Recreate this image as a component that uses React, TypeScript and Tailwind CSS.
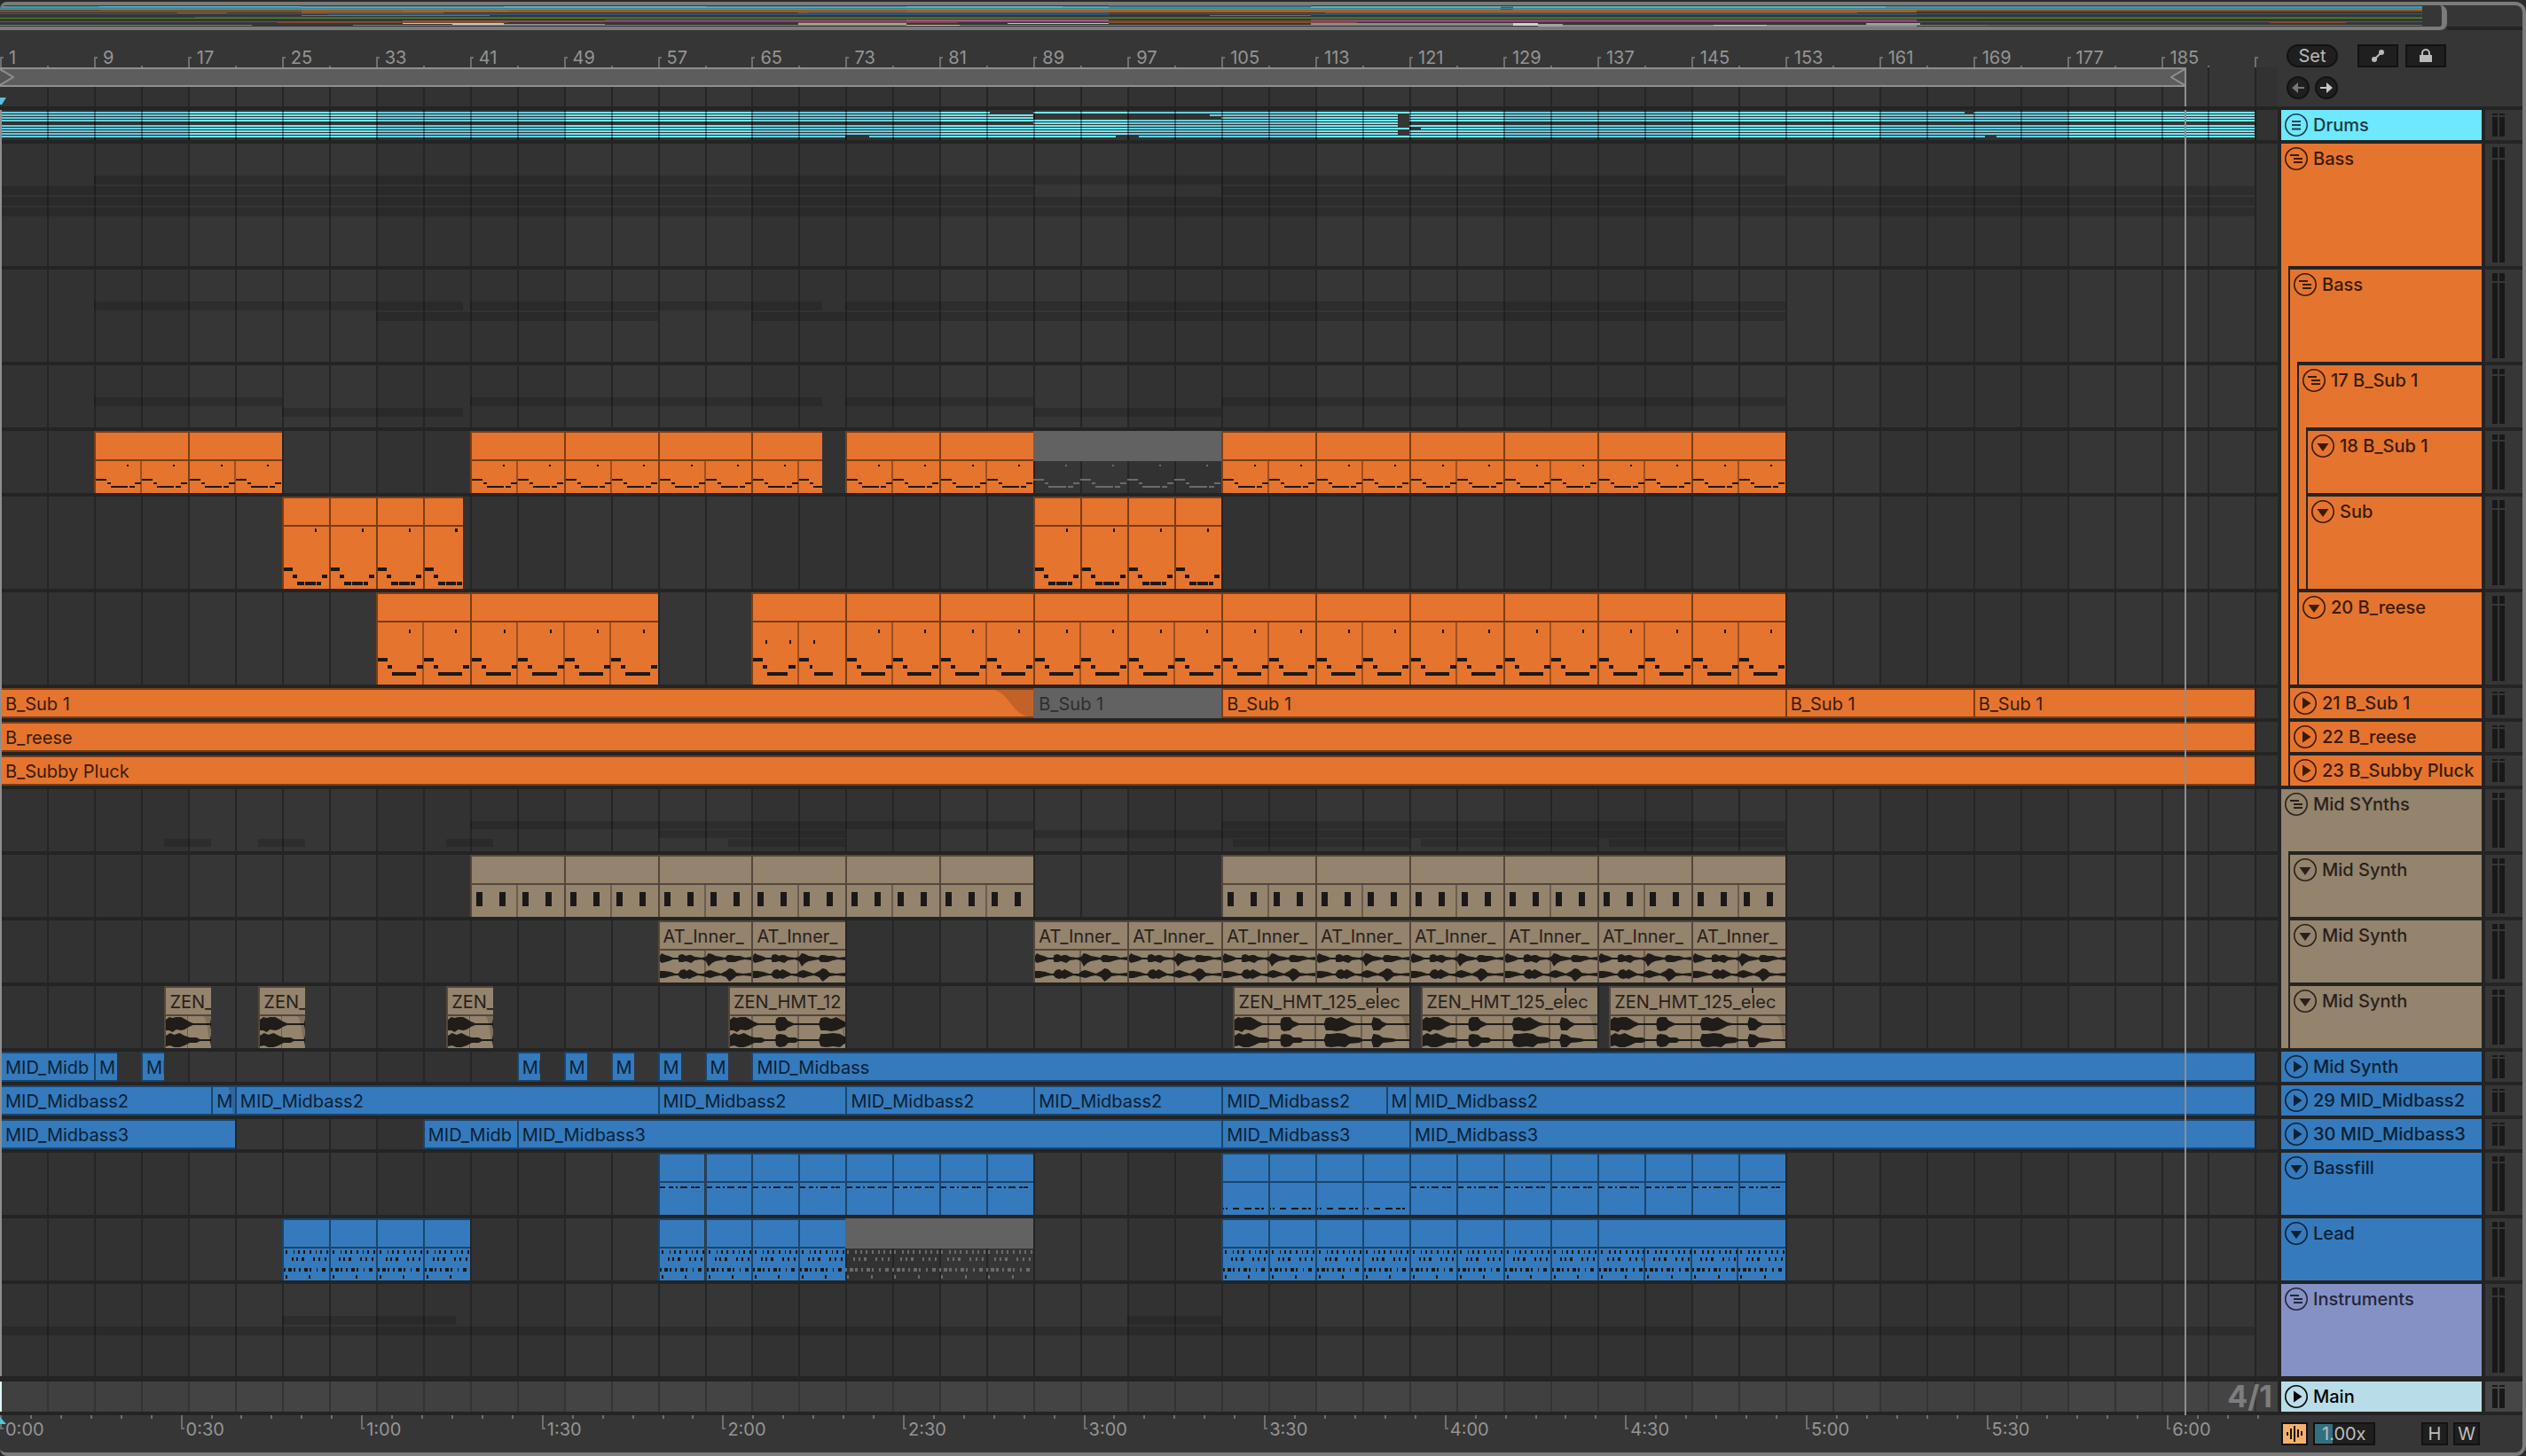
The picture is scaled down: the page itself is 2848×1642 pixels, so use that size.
import { useState } from 'react'
import clsx from 'clsx'

const VISIBLE_BARS = 193.93
const END_BAR = 193
const LOCATOR_BAR = 187
const BARS_PER_SECOND = 0.5125
// drawing units per bar inside the clip previews
const UNIT = 13.25

const barPos = (bar: number) => `${((bar - 1) / VISIBLE_BARS) * 100}%`
const barLen = (bars: number) => `${(bars / VISIBLE_BARS) * 100}%`
const range = (from: number, to: number, step: number) =>
  Array.from({ length: Math.ceil((to - from) / step) }, (_, i) => from + i * step)

type Tone = 'cyan' | 'orange' | 'tan' | 'blue' | 'violet' | 'main'
type Note = [x: number, y: number, w: number, h: number]
type Preview = 'sub' | 'subTall' | 'reese' | 'reeseIntro' | 'chords' | 'fill' | 'fillLow' | 'lead' | 'inner' | 'zen'

interface Clip {
  start: number
  end: number
  name?: string
  preview?: Preview
  off?: boolean
  fade?: number
}

interface Track {
  name: string
  tone: Tone
  kind: 'drums' | 'group' | 'open' | 'folded'
  size: 'xs' | 'sm' | 'md' | 'lg'
  clips?: Clip[]
  summary?: [number, number][][]
  tight?: boolean
  children?: Track[]
}

const TONES: Record<Tone, { fill: string; edge: string; text: string; line: string }> = {
  cyan: { fill: 'bg-[#6ee8ff]', edge: 'border-[#2f6f7c]', text: 'text-[#1c3c44]', line: '#2f6f7c' },
  orange: { fill: 'bg-[#e5742e]', edge: 'border-[#7a3d15]', text: 'text-[#3a1c06]', line: '#9c4f20' },
  tan: { fill: 'bg-[#94836d]', edge: 'border-[#54473b]', text: 'text-[#28211b]', line: '#6b5d4d' },
  blue: { fill: 'bg-[#357abc]', edge: 'border-[#1a456d]', text: 'text-[#0a2236]', line: '#1a456d' },
  violet: { fill: 'bg-[#8591c5]', edge: 'border-[#454b69]', text: 'text-[#23263a]', line: '#454b69' },
  main: { fill: 'bg-[#b8dde8]', edge: 'border-[#5d6f74]', text: 'text-[#050505]', line: '#5d6f74' },
}

const SIZES = { xs: 'h-[34px]', sm: 'h-[70px]', md: 'h-[104px]', lg: 'h-[138px]' }

const split = (start: number, end: number, step: number, preview: Preview, name?: string): Clip[] =>
  range(start, end, step).map((s) => ({ start: s, end: Math.min(s + step, end), preview, name }))

const PATTERNS: Record<Exclude<Preview, 'inner' | 'zen'>, { bars: number; notes: Note[] }> = {
  sub: {
    bars: 4,
    notes: [[37, 4, 2, 2], [1, 20, 12, 2], [14, 24, 4, 2], [18, 28, 20, 2], [40, 28, 6, 2], [46, 24, 7, 2]],
  },
  subTall: {
    bars: 4,
    notes: [
      [37, 2, 3, 4], [1, 46, 10, 4], [11, 54, 6, 4], [17, 62, 8, 4], [26, 62, 12, 4], [39, 62, 6, 4], [46, 54, 6, 4],
    ],
  },
  reese: {
    bars: 4,
    notes: [[37, 8, 2, 4], [1, 40, 11, 4], [12, 48, 5, 4], [17, 56, 28, 4], [46, 48, 7, 4]],
  },
  reeseIntro: {
    bars: 8,
    notes: [
      [15, 20, 2, 4], [43, 20, 2, 4], [70, 20, 2, 4], [1, 40, 11, 4], [12, 48, 5, 4], [17, 56, 24, 4],
      [42, 48, 8, 4], [54, 40, 11, 4], [66, 48, 3, 4], [71, 56, 22, 4],
    ],
  },
  chords: { bars: 2, notes: [[6, 8, 7, 16]] },
  fill: {
    bars: 4,
    notes: [[1, 4, 6, 2], [11, 4, 6, 2], [20, 4, 2, 2], [25, 4, 8, 2], [37, 4, 5, 2], [43, 4, 5, 2]],
  },
  fillLow: {
    bars: 4,
    notes: [[0, 28, 2, 2], [4, 28, 2, 2], [12, 28, 8, 2], [26, 28, 8, 2], [38, 28, 6, 2], [46, 28, 3, 2]],
  },
  lead: {
    bars: 4,
    notes: [
      [3, 2, 2, 4], [12, 2, 2, 4], [18, 2, 2, 4], [24, 2, 2, 4], [31, 2, 2, 4], [38, 2, 2, 4], [44, 2, 2, 4],
      [51, 2, 2, 4], [10, 10, 2, 4], [16, 10, 2, 4], [22, 10, 3, 4], [35, 10, 2, 4], [42, 10, 2, 4],
      [49, 10, 2, 4], [1, 22, 2, 4], [6, 22, 4, 4], [12, 22, 3, 4], [19, 22, 2, 4], [25, 22, 4, 4],
      [31, 22, 2, 4], [39, 22, 2, 4], [46, 22, 4, 4], [3, 30, 2, 4], [30, 30, 2, 4],
    ],
  },
}

// [x, height above the centre, height below it]
type Peak = [number, number, number]

const INNER_WAVE: { left: Peak[]; right: Peak[] } = {
  left: [
    [0, 3, 3], [2, 6, 5], [6, 4, 4], [10, 3, 3], [15, 1, 1], [21, 1, 1], [22, 4, 4], [26, 5, 4], [30, 3, 3],
    [33, 4, 4], [36, 4, 5], [40, 2, 2], [48, 1, 1], [53, 2, 3], [56, 6, 9], [60, 5, 5], [64, 3, 3], [70, 2, 2],
    [75, 1, 1], [78, 4, 4], [82, 4, 4], [86, 3, 4], [92, 3, 2], [98, 1, 1], [106, 2, 2],
  ],
  right: [
    [0, 4, 4], [5, 4, 4], [12, 3, 2], [18, 1, 1], [21, 1, 1], [24, 5, 4], [28, 6, 5], [31, 4, 4], [34, 6, 5],
    [38, 4, 3], [44, 1, 1], [50, 1, 2], [54, 4, 3], [58, 5, 4], [64, 3, 2], [70, 1, 1], [76, 4, 3], [80, 7, 8],
    [84, 6, 5], [88, 2, 2], [96, 1, 1], [106, 2, 2],
  ],
}

const ZEN_WAVE: { left: Peak[]; right: Peak[] } = {
  left: [
    [0, 5, 7], [4, 8, 7], [8, 7, 9], [12, 8, 6], [18, 8, 7], [22, 6, 6], [27, 3, 3], [32, 1, 1], [52, 1, 1],
    [53, 6, 6], [56, 8, 8], [63, 8, 7], [66, 4, 4], [73, 1, 1], [102, 1, 1], [104, 7, 7], [110, 8, 7],
    [116, 6, 8], [122, 8, 7], [127, 5, 5], [133, 2, 2], [138, 1, 1], [156, 1, 1], [158, 8, 7], [165, 6, 7],
    [168, 3, 4], [173, 1, 1], [200, 1, 1],
  ],
  right: [
    [0, 5, 7], [5, 8, 6], [10, 6, 8], [16, 8, 8], [22, 5, 6], [28, 3, 3], [36, 3, 3], [40, 1, 1], [52, 1, 1],
    [53, 6, 6], [57, 7, 8], [63, 6, 7], [67, 3, 3], [75, 3, 3], [78, 1, 1], [102, 1, 1], [104, 7, 7],
    [110, 7, 8], [118, 8, 7], [126, 7, 8], [131, 4, 4], [142, 3, 3], [146, 1, 1], [156, 1, 1], [158, 7, 8],
    [164, 6, 8], [169, 3, 3], [180, 2, 2], [184, 1, 1], [200, 1, 1],
  ],
}

function wavePath(peaks: Peak[], mid: number) {
  const top = peaks.map(([x, up]) => `${x} ${mid - up}`)
  const bottom = [...peaks].reverse().map(([x, , down]) => `${x} ${mid + down}`)
  return `M${[...top, ...bottom].join('L')}Z`
}

const TRACKS: Track[] = [
  { name: 'Drums', tone: 'cyan', kind: 'drums', size: 'xs' },
  {
    name: 'Bass',
    tone: 'orange',
    kind: 'group',
    size: 'lg',
    summary: [[[9, 153]], [[1, 89], [105, 193]], [[1, 193]], [[1, 193]]],
    children: [
      {
        name: 'Bass',
        tone: 'orange',
        kind: 'group',
        size: 'md',
        summary: [[[9, 40.4], [41, 71], [73, 153]], [[33, 57], [65, 153]]],
        children: [
          {
            name: '17 B_Sub 1',
            tone: 'orange',
            kind: 'group',
            size: 'sm',
            summary: [[[9, 25], [41, 71], [73, 89], [105, 153]], [[25, 40.4], [89, 105]]],
            children: [
              {
                name: '18 B_Sub 1',
                tone: 'orange',
                kind: 'open',
                size: 'sm',
                clips: [
                  ...split(9, 25, 8, 'sub'),
                  ...split(41, 71, 8, 'sub'),
                  ...split(73, 89, 8, 'sub'),
                  { start: 89, end: 105, preview: 'sub', off: true },
                  ...split(105, 153, 8, 'sub'),
                ],
              },
              {
                name: 'Sub',
                tone: 'orange',
                kind: 'open',
                size: 'md',
                clips: [...split(25, 40.4, 4, 'subTall'), ...split(89, 105, 4, 'subTall')],
              },
            ],
          },
          {
            name: '20 B_reese',
            tone: 'orange',
            kind: 'open',
            size: 'md',
            clips: [
              { start: 33, end: 41, preview: 'reese' },
              { start: 41, end: 57, preview: 'reese' },
              { start: 65, end: 73, preview: 'reeseIntro' },
              ...split(73, 153, 8, 'reese'),
            ],
          },
        ],
      },
      {
        name: '21 B_Sub 1',
        tone: 'orange',
        kind: 'folded',
        size: 'xs',
        clips: [
          { start: 1, end: 89, name: 'B_Sub 1', fade: 45 },
          { start: 89, end: 105, name: 'B_Sub 1', off: true },
          { start: 105, end: 153, name: 'B_Sub 1' },
          { start: 153, end: 169, name: 'B_Sub 1' },
          { start: 169, end: 193, name: 'B_Sub 1' },
        ],
      },
      { name: '22 B_reese', tone: 'orange', kind: 'folded', size: 'xs', clips: [{ start: 1, end: 193, name: 'B_reese' }] },
      {
        name: '23 B_Subby Pluck',
        tone: 'orange',
        kind: 'folded',
        size: 'xs',
        clips: [{ start: 1, end: 193, name: 'B_Subby Pluck' }],
      },
    ],
  },
  {
    name: 'Mid SYnths',
    tone: 'tan',
    kind: 'group',
    size: 'sm',
    tight: true,
    summary: [
      [[41, 89], [105, 153]],
      [[57, 73], [89, 153]],
      [[15, 19], [23, 27], [39, 43], [63, 73], [106, 121], [122, 137], [138, 153]],
    ],
    children: [
      {
        name: 'Mid Synth',
        tone: 'tan',
        kind: 'open',
        size: 'sm',
        clips: [...split(41, 89, 8, 'chords'), ...split(105, 153, 8, 'chords')],
      },
      {
        name: 'Mid Synth',
        tone: 'tan',
        kind: 'open',
        size: 'sm',
        clips: [...split(57, 73, 8, 'inner', 'AT_Inner_'), ...split(89, 153, 8, 'inner', 'AT_Inner_')],
      },
      {
        name: 'Mid Synth',
        tone: 'tan',
        kind: 'open',
        size: 'sm',
        clips: [
          { start: 15, end: 19, name: 'ZEN_', preview: 'zen', fade: 8 },
          { start: 23, end: 27, name: 'ZEN_', preview: 'zen', fade: 8 },
          { start: 39, end: 43, name: 'ZEN_', preview: 'zen', fade: 8 },
          { start: 63, end: 73, name: 'ZEN_HMT_12', preview: 'zen', fade: 8 },
          { start: 106, end: 121, name: 'ZEN_HMT_125_elec', preview: 'zen', fade: 8 },
          { start: 122, end: 137, name: 'ZEN_HMT_125_elec', preview: 'zen', fade: 8 },
          { start: 138, end: 153, name: 'ZEN_HMT_125_elec', preview: 'zen', fade: 8 },
        ],
      },
    ],
  },
  {
    name: 'Mid Synth',
    tone: 'blue',
    kind: 'folded',
    size: 'xs',
    clips: [
      { start: 1, end: 9, name: 'MID_Midb' },
      { start: 9, end: 11, name: 'M' },
      { start: 13, end: 15, name: 'MI' },
      { start: 45, end: 47, name: 'MI' },
      ...[49, 53, 57, 61].map((start) => ({ start, end: start + 2, name: 'M' })),
      { start: 65, end: 193, name: 'MID_Midbass' },
    ],
  },
  {
    name: '29 MID_Midbass2',
    tone: 'blue',
    kind: 'folded',
    size: 'xs',
    clips: [
      { start: 1, end: 19, name: 'MID_Midbass2' },
      { start: 19, end: 21, name: 'M', fade: 8 },
      { start: 21, end: 57, name: 'MID_Midbass2' },
      { start: 57, end: 73, name: 'MID_Midbass2' },
      { start: 73, end: 89, name: 'MID_Midbass2' },
      { start: 89, end: 105, name: 'MID_Midbass2' },
      { start: 105, end: 119, name: 'MID_Midbass2' },
      { start: 119, end: 121, name: 'M' },
      { start: 121, end: 193, name: 'MID_Midbass2' },
    ],
  },
  {
    name: '30 MID_Midbass3',
    tone: 'blue',
    kind: 'folded',
    size: 'xs',
    clips: [
      { start: 1, end: 21, name: 'MID_Midbass3' },
      { start: 37, end: 45, name: 'MID_Midb' },
      { start: 45, end: 105, name: 'MID_Midbass3' },
      { start: 105, end: 121, name: 'MID_Midbass3' },
      { start: 121, end: 193, name: 'MID_Midbass3' },
    ],
  },
  {
    name: 'Bassfill',
    tone: 'blue',
    kind: 'open',
    size: 'sm',
    clips: [...split(57, 89, 4, 'fill'), ...split(105, 121, 4, 'fillLow'), ...split(121, 153, 4, 'fill')],
  },
  {
    name: 'Lead',
    tone: 'blue',
    kind: 'open',
    size: 'sm',
    clips: [
      ...split(25, 41, 4, 'lead'),
      ...split(57, 73, 4, 'lead'),
      { start: 73, end: 89, preview: 'lead', off: true },
      ...split(105, 137, 4, 'lead'),
      { start: 137, end: 153, preview: 'lead' },
    ],
  },
  {
    name: 'Instruments',
    tone: 'violet',
    kind: 'group',
    size: 'md',
    summary: [[[25, 39.8], [97, 105]], [[1, 193]]],
  },
]

const MAIN: Track = { name: 'Main', tone: 'main', kind: 'folded', size: 'xs' }

const DRUM_ROWS: [number, number][][] = [
  [[1, 85.3], [89, 168.3], [169, 193]],
  [[1, 89], [104, 120], [121, 193]],
  [[1, 89], [105, 120], [121, 193]],
  [[1, 120], [121, 193]],
  [[89, 120]],
  [[1, 120], [121, 193]],
  [[1, 121], [122, 193]],
  [[1, 120], [121, 193]],
  [[1, 120], [121, 193]],
  [[1, 73], [75, 96], [98, 170], [171, 193]],
]

// [x, y, width, height, colour] on a 2730 x 24 strip
const OVERVIEW: [number, number, number, number, string][] = [
  [0, 1, 2730, 4, '#4796a3'], [112, 1, 228, 1, '#5cb9c8'], [340, 2, 910, 2, '#54aebc'], [568, 1, 228, 1, '#5cb9c8'],
  [1022, 1, 176, 1, '#5cb9c8'], [1250, 0, 228, 2, '#2d6c75'], [1478, 1, 214, 3, '#54b3c2'], [1706, 1, 420, 2, '#54b3c2'],
  [1692, 2, 14, 3, '#356068'], [0, 3, 2730, 1, '#3e8490'],
  [0, 5, 340, 3, '#7b4f2a'], [0, 5, 112, 1, '#5d4431'], [340, 5, 910, 3, '#9b5a26'], [454, 6, 120, 1, '#bb6526'],
  [1022, 5, 1138, 3, '#a85f25'], [2160, 5, 570, 2, '#8a5126'],
  [200, 8, 56, 1, '#655a4c'], [340, 8, 160, 1, '#655a4c'], [900, 8, 350, 1, '#655a4c'], [1494, 8, 600, 1, '#655a4c'],
  [0, 9, 2730, 1, '#2e5c84'], [370, 9, 540, 2, '#28567d'], [910, 8, 340, 3, '#28567d'], [1478, 9, 682, 2, '#28567d'],
  [340, 11, 212, 1, '#4c8f2e'], [1364, 11, 114, 1, '#4c8f2e'], [220, 13, 2510, 1, '#4b5560'],
  [0, 14, 2730, 1, '#4c8a22'], [682, 16, 568, 3, '#7f4672'], [1022, 16, 228, 2, '#a84f8a'], [1478, 16, 682, 3, '#94437c'],
  [0, 18, 2730, 1, '#694a73'], [340, 18, 114, 2, '#8e4540'], [454, 17, 228, 2, '#8e4a4a'], [1250, 17, 228, 2, '#7b463a'],
  [312, 19, 260, 1, '#7c4a2c'], [900, 19, 180, 1, '#7c4a2c'], [1250, 19, 280, 1, '#8a4f2a'], [2558, 19, 86, 1, '#8a4f2a'],
  [454, 20, 114, 1, '#c4c4c4'], [510, 21, 58, 1, '#c4c4c4'], [568, 21, 114, 2, '#8e8e8e'], [0, 22, 2730, 1, '#7d7d7d'],
  [284, 22, 114, 1, '#363636'], [900, 20, 122, 2, '#a3a3a3'], [1022, 22, 60, 1, '#c4c4c4'], [1136, 20, 114, 1, '#c4c4c4'],
  [1478, 20, 228, 2, '#8c8c8c'], [1706, 20, 28, 3, '#d2d2d2'], [1734, 21, 28, 3, '#a3a3a3'], [1762, 22, 398, 2, '#8c8c8c'],
  [1932, 22, 60, 1, '#c4c4c4'], [2104, 20, 60, 2, '#a3a3a3'], [2240, 22, 490, 1, '#6e6e6e'],
]

function Grid({ overlay = false }: { overlay?: boolean }) {
  return (
    <div className="pointer-events-none absolute inset-0 overflow-hidden">
      {range(overlay ? 1 : 17, END_BAR, 32).map((bar) => (
        <div
          key={bar}
          className={clsx('absolute inset-y-0', overlay ? 'bg-[#323232]/15' : 'bg-[#363636]')}
          style={{ left: barPos(bar), width: barLen(16) }}
        />
      ))}
      {range(5, END_BAR + 1, 4).map((bar) => (
        <div
          key={bar}
          className={clsx('absolute inset-y-0 w-0.5', overlay ? 'bg-black/35' : 'bg-[#252525]')}
          style={{ left: barPos(bar) }}
        />
      ))}
    </div>
  )
}

function Locator() {
  return <div className="absolute inset-y-0 w-0.5 bg-[#8f8f8f]" style={{ left: barPos(LOCATOR_BAR) }} />
}

function Overview() {
  return (
    <div className="flex h-7">
      <div className="w-[97%] rounded-r-lg border-r-[6px] border-b-4 border-[#7b7b7b]">
        <svg className="h-6 w-[99.2%]" viewBox="0 0 2730 24" preserveAspectRatio="none" shapeRendering="crispEdges">
          {OVERVIEW.map(([x, y, w, h, fill], i) => (
            <rect key={i} x={x} y={y} width={w} height={h} fill={fill} />
          ))}
        </svg>
      </div>
      <div className="flex-1 border-b-4 border-[#242424]" />
    </div>
  )
}

function BarRuler() {
  return (
    <div className="relative h-[42px] text-[20px] leading-[22px] text-[#949494]">
      {range(5, END_BAR, 8).map((bar) => (
        <div key={bar} className="absolute bottom-0 h-0.5 w-0.5 bg-[#6f6f6f]" style={{ left: barPos(bar) }} />
      ))}
      {range(1, END_BAR + 1, 8).map((bar) => (
        <div key={bar} className="absolute bottom-0 flex items-end gap-1.5" style={{ left: barPos(bar) }}>
          <div className="h-3 w-1 border-t-2 border-l-2 border-[#6f6f6f]" />
          {bar < END_BAR && <span>{bar}</span>}
        </div>
      ))}
    </div>
  )
}

function LoopBrace() {
  return (
    <div
      className="relative flex h-[22px] justify-between border-y-2 border-[#8f8f8f] bg-[#5d5d5d]"
      style={{ width: barLen(LOCATOR_BAR - 1) }}
    >
      <svg className="h-[18px] w-4 fill-[#555] stroke-[#8f8f8f] stroke-2" viewBox="0 0 16 18">
        <path d="M0 0 15 9 0 18" />
      </svg>
      <svg className="h-[18px] w-4 fill-[#555] stroke-[#8f8f8f] stroke-2" viewBox="0 0 16 18">
        <path d="M16 0 1 9 16 18" />
      </svg>
    </div>
  )
}

function TimeRuler() {
  return (
    <div className="relative h-full flex-1 text-[20px] leading-6 text-[#949494]">
      {range(5, 376, 5)
        .filter((s) => s % 30 !== 0)
        .map((s) => (
          <div key={s} className="absolute top-0 h-1 w-0.5 bg-[#6f6f6f]" style={{ left: barLen(s * BARS_PER_SECOND) }} />
        ))}
      {range(0, 361, 30).map((s) => (
        <div key={s} className="absolute top-0 flex gap-0.5" style={{ left: barLen(s * BARS_PER_SECOND) }}>
          <div className="h-4 w-1 border-b-2 border-l-2 border-[#6f6f6f]" />
          <span className="pt-1">{`${Math.floor(s / 60)}:${String(s % 60).padStart(2, '0')}`}</span>
        </div>
      ))}
      <svg className="absolute top-0.5 left-0 h-2 w-2 fill-[#55c3d9]" viewBox="0 0 8 8">
        <path d="M0 0 7 8H0Z" />
      </svg>
    </div>
  )
}

function ClipPreview({ clip, tone, tall }: { clip: Clip; tone: Tone; tall: boolean }) {
  const bars = clip.end - clip.start
  const height = tall ? 70 : 36
  const width = bars * UNIT
  const ink = clip.off ? '#6b6b6b' : '#1b1917'
  const preview = clip.preview!

  return (
    <svg
      className="block min-h-0 w-full flex-1"
      viewBox={`0 0 ${width} ${height}`}
      preserveAspectRatio="none"
      shapeRendering="crispEdges"
    >
      {!clip.off &&
        range(clip.start, clip.end, 1)
          .filter((bar) => (bar - 1) % 4 === 0 && bar > clip.start)
          .map((bar) => (
            <rect key={bar} x={(bar - clip.start) * UNIT - 2} width={2} height={height} fill={TONES[tone].line} />
          ))}
      {preview === 'inner' || preview === 'zen' ? (
        <g fill="#1f1c19" shapeRendering="auto">
          <path d={wavePath((preview === 'inner' ? INNER_WAVE : ZEN_WAVE).left, 9)} />
          <path d={wavePath((preview === 'inner' ? INNER_WAVE : ZEN_WAVE).right, 27)} />
        </g>
      ) : (
        range(0, bars, PATTERNS[preview].bars).map((offset) => (
          <g key={offset} transform={`translate(${offset * UNIT - 1} 0)`} fill={ink}>
            {PATTERNS[preview].notes.map(([x, y, w, h]) => (
              <rect key={`${x}-${y}`} x={x} y={y} width={w} height={h} />
            ))}
          </g>
        ))
      )}
      {clip.fade && (
        <path
          d={`M${width - 9} 0Q${width - 5} 4 ${width - 3} 22L${width} 36V0Z`}
          fill="#000"
          fillOpacity={0.15}
          shapeRendering="auto"
        />
      )}
    </svg>
  )
}

function ClipView({ clip, track }: { clip: Clip; track: Track }) {
  const tone = TONES[track.tone]
  const folded = track.kind === 'folded'

  return (
    <div
      className={clsx(
        'absolute inset-y-0 flex flex-col overflow-hidden',
        !clip.off && ['border-t-2 border-l-2', tone.edge, tone.fill],
        !clip.off && folded && 'border-b-2',
      )}
      style={{ left: barPos(clip.start), width: barLen(clip.end - clip.start) }}
    >
      <div
        className={clsx(
          'shrink-0 overflow-hidden text-[20px] leading-8 whitespace-nowrap',
          clip.off ? 'bg-[#626262] pl-1.5 text-[#2e2e2e]' : ['pl-1', tone.text],
          clip.off && (folded ? 'h-full pt-0.5' : 'h-[34px]'),
          !clip.off && (folded ? 'h-full' : ['h-8 border-b-2', tone.edge]),
        )}
      >
        {clip.name}
      </div>
      {clip.preview && <ClipPreview clip={clip} tone={track.tone} tall={track.size === 'md'} />}
      {folded && clip.fade && (
        <svg
          className={clsx('absolute inset-y-0 right-0 h-full fill-black/15', clip.fade > 10 ? 'w-11' : 'w-2')}
          viewBox="0 0 44 30"
          preserveAspectRatio="none"
        >
          <path d="M0 0C16 4 22 28 38 30H44V0Z" />
        </svg>
      )}
      {clip.preview === 'zen' && clip.end - clip.start === 15 && (
        <div className="absolute top-0 left-[81%] h-1.5 w-0.5 bg-[#28211b]" />
      )}
    </div>
  )
}

function Summary({ rows, tight }: { rows: [number, number][][]; tight?: boolean }) {
  return (
    <div className={clsx('flex h-full flex-col pt-9', tight ? 'gap-px' : 'gap-0.5')}>
      {rows.map((spans, i) => (
        <div key={i} className={clsx('relative', tight ? 'h-[9px]' : 'h-2.5')}>
          {spans.map(([start, end]) => (
            <div
              key={start}
              className="absolute inset-y-0 bg-black/15"
              style={{ left: barPos(start), width: barLen(end - start) }}
            />
          ))}
        </div>
      ))}
    </div>
  )
}

function DrumLane() {
  return (
    <>
      <div className="flex flex-col gap-px pt-0.5">
        {DRUM_ROWS.map((spans, i) => (
          <div key={i} className="relative h-0.5">
            {spans.map(([start, end]) => (
              <div
                key={start}
                className="absolute inset-y-0 bg-[#6ee8ff]"
                style={{ left: barPos(start), width: barLen(end - start) }}
              />
            ))}
          </div>
        ))}
      </div>
      <Grid overlay />
    </>
  )
}

function flatten(tracks: Track[]): Track[] {
  return tracks.flatMap((t) => [t, ...flatten(t.children ?? [])])
}

function FoldIcon({ kind }: { kind: Track['kind'] }) {
  return (
    <svg className="h-[26px] w-[26px]" viewBox="0 0 26 26" fill="none" stroke="currentColor" strokeWidth="1.6">
      <circle cx="13" cy="13" r="12.2" />
      {kind === 'drums' && <path d="M8 9h10M8 13h10M8 17.5h10" strokeWidth="2" />}
      {kind === 'group' && <path d="M6 9h10M10 13h10M10 17h10" strokeWidth="2" />}
      {kind === 'open' && <path d="M6.5 10h13L13 19Z" fill="currentColor" stroke="none" />}
      {kind === 'folded' && <path d="M10 6.5v13L19.5 13Z" fill="currentColor" stroke="none" />}
    </svg>
  )
}

function TrackHeader({ track }: { track: Track }) {
  const tone = TONES[track.tone]
  return (
    <div className={clsx('flex items-start gap-1.5 pt-1 pl-1', SIZES[track.size], tone.fill, tone.text)}>
      <button type="button" aria-label={`Unfold ${track.name}`} className="shrink-0">
        <FoldIcon kind={track.kind} />
      </button>
      <span className="text-[20px] leading-[26px] font-medium whitespace-nowrap">{track.name}</span>
    </div>
  )
}

function TrackTree({ track }: { track: Track }) {
  return (
    <div>
      <TrackHeader track={track} />
      {track.children && (
        <div className={clsx('flex', TONES[track.tone].fill)}>
          <div className="ml-2 flex flex-1 flex-col gap-1 bg-[#242424] pt-1 pl-0.5">
            {track.children.map((child, i) => (
              <TrackTree key={i} track={child} />
            ))}
          </div>
        </div>
      )}
    </div>
  )
}

function Meter({ track }: { track: Track }) {
  return (
    <div
      className={clsx(
        'flex gap-0.5 py-1 pl-2',
        SIZES[track.size],
        track.tone === 'main' ? 'bg-[#464646]' : 'bg-[#363636]',
      )}
    >
      {[0, 1].map((ch) => (
        <div key={ch} className="flex w-1.5 flex-col gap-0.5">
          <div className="h-[9%] bg-[#181818]" />
          <div className="flex-1 bg-[#181818]" />
        </div>
      ))}
    </div>
  )
}

function Controls() {
  return (
    <div className="w-[276px] pt-4 pl-2.5">
      <div className="flex items-center text-[#b9b9b9]">
        <button
          type="button"
          className="h-[26px] w-[58px] rounded-full border-2 border-[#121212] bg-[#1f1f1f] text-[20px] leading-[22px]"
        >
          Set
        </button>
        <button
          type="button"
          aria-label="Automation mode"
          className="ml-[22px] flex h-[26px] w-[46px] items-center justify-center border-2 border-[#121212] bg-[#1f1f1f]"
        >
          <svg className="h-4 w-4" viewBox="0 0 16 16" fill="currentColor" stroke="currentColor">
            <path d="M4 12 12 4" strokeWidth="2" />
            <circle cx="4" cy="12" r="3" stroke="none" />
            <circle cx="12" cy="4" r="3" stroke="none" />
          </svg>
        </button>
        <button
          type="button"
          aria-label="Lock envelopes"
          className="ml-2 flex h-[26px] w-[46px] items-center justify-center border-2 border-[#121212] bg-[#1f1f1f]"
        >
          <svg className="h-4 w-4" viewBox="0 0 16 16" fill="none" stroke="currentColor" strokeWidth="2">
            <path d="M4 8V5a4 4 0 0 1 8 0v3" />
            <path d="M1 7h14v8H1Z" fill="currentColor" stroke="none" />
          </svg>
        </button>
      </div>
      <div className="flex gap-1.5 pt-2.5">
        {['Previous locator', 'Next locator'].map((label, i) => (
          <button
            key={label}
            type="button"
            aria-label={label}
            className={clsx(
              'flex h-[26px] w-[26px] items-center justify-center rounded-full border-2 border-[#121212] bg-[#1f1f1f]',
              i === 0 ? 'rotate-180 text-[#777]' : 'text-[#c8c8c8]',
            )}
          >
            <svg className="h-3.5 w-3.5" viewBox="0 0 14 14" fill="currentColor">
              <path d="M0 6h7V1l7 6-7 6V8H0Z" />
            </svg>
          </button>
        ))}
      </div>
    </div>
  )
}

function Footer() {
  const [speed, setSpeed] = useState('1.00x')
  return (
    <div className="flex h-[42px]">
      <TimeRuler />
      <div className="flex w-[276px] items-center pl-1 text-[20px] leading-[22px] text-[#bdbdbd]">
        <button
          type="button"
          aria-label="Show waveforms"
          className="flex h-[26px] w-[30px] items-center justify-center border-2 border-[#121212] bg-[#f6b26b] text-[#1a1208]"
        >
          <svg className="h-[18px] w-[18px]" viewBox="0 0 18 18" stroke="currentColor" strokeWidth="2">
            <path d="M1 7v4M5 3v12M9 0v18M13 4v9M17 6v5" />
          </svg>
        </button>
        <input
          aria-label="Playback speed"
          value={speed}
          onChange={(e) => setSpeed(e.target.value)}
          className="ml-1.5 h-[26px] w-[70px] border-2 border-[#121212] bg-[linear-gradient(90deg,#33707f_30%,#1f1f1f_30%)] pl-2 outline-none"
        />
        <button type="button" className="ml-[52px] h-[26px] w-[30px] border-2 border-[#121212] bg-[#1f1f1f] leading-[22px]">
          H
        </button>
        <button type="button" className="ml-1.5 h-[26px] w-[30px] border-2 border-[#121212] bg-[#1f1f1f] leading-[22px]">
          W
        </button>
      </div>
    </div>
  )
}

export default function App() {
  const rows = flatten(TRACKS)

  return (
    <div className="min-h-screen overflow-hidden bg-[#2a2a2a] pt-0.5 font-['Inter','Liberation_Sans',sans-serif]">
      <div className="overflow-hidden rounded-xl rounded-l-lg border-4 border-l-0 border-[#7b7b7b] bg-[#363636]">
        <Overview />

        <div className="flex border-b-4 border-[#242424]">
          <div className="flex-1">
            <BarRuler />
            <div className="relative h-11 bg-[#323232]">
              <Grid />
              <LoopBrace />
              <Locator />
              <svg className="absolute bottom-0.5 left-0 h-2 w-2 fill-[#55c3d9]" viewBox="0 0 8 8">
                <path d="M0 0h7L2 8H0Z" />
              </svg>
            </div>
          </div>
          <Controls />
        </div>

        <div className="flex bg-[#242424]">
          <div className="relative flex-1 bg-[#323232]">
            <Grid />
            {rows.map((track, i) => (
              <div
                key={i}
                className={clsx(
                  'relative box-content border-[#242424]',
                  SIZES[track.size],
                  i === rows.length - 1 ? 'border-b-6' : 'border-b-4',
                )}
              >
                {track.kind === 'drums' && <DrumLane />}
                {track.summary && <Summary rows={track.summary} tight={track.tight} />}
                {track.clips?.map((clip) => <ClipView key={clip.start} clip={clip} track={track} />)}
              </div>
            ))}
            <div className="relative box-content h-[34px] border-b-4 border-[#242424] bg-white/7">
              <div className="absolute right-1.5 text-[34px] leading-[34px] font-bold text-[#7d7d7d]">4/1</div>
            </div>
            <Locator />
            <div className="absolute top-0 bottom-11 left-0 w-0.5 bg-[#8f8f8f]" />
            <div className="absolute bottom-1 left-0 h-[34px] w-0.5 bg-[#e2f8ff]" />
          </div>

          <div className="ml-1 flex w-[226px] flex-col gap-1">
            {TRACKS.map((track, i) => (
              <TrackTree key={i} track={track} />
            ))}
            <div className="pt-0.5">
              <TrackHeader track={MAIN} />
            </div>
          </div>

          <div className="ml-1 flex w-[42px] flex-col gap-1">
            {rows.map((track, i) => (
              <Meter key={i} track={track} />
            ))}
            <div className="pt-0.5">
              <Meter track={MAIN} />
            </div>
          </div>
        </div>

        <Footer />
      </div>
    </div>
  )
}
